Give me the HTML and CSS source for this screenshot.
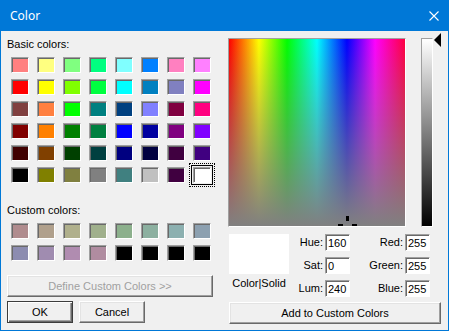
FILE: index.html
```html
<!DOCTYPE html>
<html lang="en">
<head>
    <meta charset="UTF-8">
    <title>Color</title>
    <link rel="stylesheet" href="styles.css">
</head>
<body>
    <div class="dialog">
        <div class="titlebar">
            <span class="title">Color</span>
            <svg class="close" width="10" height="10" viewBox="0 0 10 10">
                <path d="M0.5 0.5 L9.5 9.5 M9.5 0.5 L0.5 9.5" stroke="#fff" stroke-width="1.1" fill="none"/>
            </svg>
        </div>
        <div class="content">
            <div class="left">
                <div class="label">Basic colors:</div>
                <div class="swatches">
                    <span class="swatch" style="background:#ff8080"></span>
                    <span class="swatch" style="background:#ffff80"></span>
                    <span class="swatch" style="background:#80ff80"></span>
                    <span class="swatch" style="background:#00ff80"></span>
                    <span class="swatch" style="background:#80ffff"></span>
                    <span class="swatch" style="background:#0080ff"></span>
                    <span class="swatch" style="background:#ff80c0"></span>
                    <span class="swatch" style="background:#ff80ff"></span>

                    <span class="swatch" style="background:#ff0000"></span>
                    <span class="swatch" style="background:#ffff00"></span>
                    <span class="swatch" style="background:#80ff00"></span>
                    <span class="swatch" style="background:#00ff40"></span>
                    <span class="swatch" style="background:#00ffff"></span>
                    <span class="swatch" style="background:#0080c0"></span>
                    <span class="swatch" style="background:#8080c0"></span>
                    <span class="swatch" style="background:#ff00ff"></span>

                    <span class="swatch" style="background:#804040"></span>
                    <span class="swatch" style="background:#ff8040"></span>
                    <span class="swatch" style="background:#00ff00"></span>
                    <span class="swatch" style="background:#008080"></span>
                    <span class="swatch" style="background:#004080"></span>
                    <span class="swatch" style="background:#8080ff"></span>
                    <span class="swatch" style="background:#800040"></span>
                    <span class="swatch" style="background:#ff0080"></span>

                    <span class="swatch" style="background:#800000"></span>
                    <span class="swatch" style="background:#ff8000"></span>
                    <span class="swatch" style="background:#008000"></span>
                    <span class="swatch" style="background:#008040"></span>
                    <span class="swatch" style="background:#0000ff"></span>
                    <span class="swatch" style="background:#0000a0"></span>
                    <span class="swatch" style="background:#800080"></span>
                    <span class="swatch" style="background:#8000ff"></span>

                    <span class="swatch" style="background:#400000"></span>
                    <span class="swatch" style="background:#804000"></span>
                    <span class="swatch" style="background:#004000"></span>
                    <span class="swatch" style="background:#004040"></span>
                    <span class="swatch" style="background:#000080"></span>
                    <span class="swatch" style="background:#000040"></span>
                    <span class="swatch" style="background:#400040"></span>
                    <span class="swatch" style="background:#400080"></span>

                    <span class="swatch" style="background:#000000"></span>
                    <span class="swatch" style="background:#808000"></span>
                    <span class="swatch" style="background:#808040"></span>
                    <span class="swatch" style="background:#808080"></span>
                    <span class="swatch" style="background:#408080"></span>
                    <span class="swatch" style="background:#c0c0c0"></span>
                    <span class="swatch" style="background:#400040"></span>
                    <span class="swatch selected" style="background:#ffffff"></span>
                </div>

                <div class="label custom-label">Custom colors:</div>
                <div class="swatches">
                    <span class="swatch" style="background:#b08c8e"></span>
                    <span class="swatch" style="background:#b0a08c"></span>
                    <span class="swatch" style="background:#b0b08c"></span>
                    <span class="swatch" style="background:#a0b08c"></span>
                    <span class="swatch" style="background:#8cb08c"></span>
                    <span class="swatch" style="background:#8cb0a0"></span>
                    <span class="swatch" style="background:#8cb0b0"></span>
                    <span class="swatch" style="background:#8ca0b0"></span>

                    <span class="swatch" style="background:#8c8cb0"></span>
                    <span class="swatch" style="background:#a08cb0"></span>
                    <span class="swatch" style="background:#b08cb0"></span>
                    <span class="swatch" style="background:#b08ca0"></span>
                    <span class="swatch" style="background:#000000"></span>
                    <span class="swatch" style="background:#000000"></span>
                    <span class="swatch" style="background:#000000"></span>
                    <span class="swatch" style="background:#000000"></span>
                </div>

                <button class="btn define" disabled>Define Custom Colors &gt;&gt;</button>
                <div class="btn-row">
                    <button class="btn default">OK</button>
                    <button class="btn">Cancel</button>
                </div>
            </div>

            <div class="right">
                <div class="picker">
                    <div class="spectrum">
                        <svg class="cross" width="19" height="12" viewBox="0 0 19 12">
                            <rect x="8" y="0" width="3" height="5" fill="#000"/>
                            <rect x="0" y="8" width="5" height="2" fill="#000"/>
                            <rect x="14" y="8" width="5" height="2" fill="#000"/>
                        </svg>
                    </div>
                    <div class="lum">
                        <svg class="arrow" width="7" height="14" viewBox="0 0 7 14">
                            <polygon points="0,7 7,0 7,14" fill="#000"/>
                        </svg>
                    </div>
                </div>

                <div class="values">
                    <div class="preview"></div>
                    <label class="vlabel">Hue:</label>
                    <input class="field" type="text" value="160">
                    <label class="vlabel">Red:</label>
                    <input class="field" type="text" value="255">

                    <label class="vlabel">Sat:</label>
                    <input class="field" type="text" value="0">
                    <label class="vlabel">Green:</label>
                    <input class="field" type="text" value="255">

                    <div class="solid">Color|Solid</div>
                    <label class="vlabel">Lum:</label>
                    <input class="field" type="text" value="240">
                    <label class="vlabel">Blue:</label>
                    <input class="field" type="text" value="255">
                </div>

                <button class="btn add">Add to Custom Colors</button>
            </div>
        </div>
    </div>
</body>
</html>
```

FILE: styles.css
```css
body { margin: 0; background: #f0f0f0; font-family: "Liberation Sans", Arial, sans-serif; font-size: 11px; color: #000; }

.dialog { width: 449px; height: 331px; box-sizing: border-box; border: 1px solid #0078d7; border-top: none; background: #f0f0f0; }

.titlebar { height: 31px; background: #0078d7; display: flex; align-items: center; padding-left: 9px; }
.title { font-family: "Noto Sans", "Open Sans", sans-serif; font-size: 12px; color: #fff; }
.close { margin-left: auto; margin-right: 9px; }

.content { display: flex; padding: 7px 0 0 6px; }

.left { width: 206px; display: flex; flex-direction: column; }
.label { line-height: 13px; height: 13px; }
.custom-label { margin-top: 21px; }

.swatches {
    display: grid;
    grid-template-columns: repeat(8, 18px);
    grid-auto-rows: 16px;
    column-gap: 8px;
    row-gap: 6px;
    margin: 6px 0 0 4px;
}
.swatch {
    box-sizing: border-box;
    border: 1px solid;
    border-color: #a0a0a0 #fff #fff #a0a0a0;
    box-shadow: inset 1px 1px 0 #696969;
}
.swatch.selected {
    box-shadow: inset 1px 1px 0 #696969, 0 0 0 1px #f0f0f0, 0 0 0 2px #000;
    outline: 1px dotted #000;
    outline-offset: 3px;
}

.btn {
    box-sizing: border-box;
    height: 22px;
    padding: 0;
    background: #f0f0f0;
    font-family: "Liberation Sans", Arial, sans-serif;
    font-size: 11px;
    color: #000;
    border: 1px solid;
    border-color: #fff #696969 #696969 #fff;
    box-shadow: inset -1px -1px 0 #a0a0a0, inset 1px 1px 0 #e3e3e3;
}
.btn:disabled { color: #a0a0a0; }
.btn.default { border-color: #3c3c3c; box-shadow: inset 1px 1px 0 #fff, inset -1px -1px 0 #696969, inset -2px -2px 0 #a0a0a0; }
.define { width: 206px; margin-top: 14px; }
.btn-row { display: flex; gap: 6px; margin-top: 4px; }
.btn-row .btn { width: 66px; }

.right { margin-left: 15px; width: 213px; display: flex; flex-direction: column; }

.picker { display: flex; align-items: flex-start; }
.spectrum {
    position: relative;
    overflow: hidden;
    width: 178px;
    height: 189px;
    box-sizing: border-box;
    border: 1px solid;
    border-color: #a0a0a0 #fff #fff #a0a0a0;
    background:
        linear-gradient(to bottom, rgba(128,128,128,0), #808080),
        linear-gradient(to right, #ff0000, #ffff00 17%, #00ff00 33%, #00ffff 50%, #0000ff 67%, #ff00ff 83%, #ff0040);
}
.cross { position: absolute; left: 109px; top: 177px; }

.lum {
    position: relative;
    margin-left: 15px;
    width: 12px;
    height: 189px;
    box-sizing: border-box;
    border: 1px solid;
    border-color: #a0a0a0 #fff #fff #a0a0a0;
    background: linear-gradient(to bottom, #fff, #000);
}
.arrow { position: absolute; left: 12px; top: -6px; }

.values {
    display: grid;
    grid-template-columns: 60px 36px 25px 55px 25px;
    grid-template-rows: 17px 17px 17px;
    row-gap: 6px;
    margin: 7px 0 0 1px;
}
.preview { grid-row: 1 / 3; grid-column: 1; background: #fff; }
.solid { grid-column: 1; text-align: center; line-height: 13px; align-self: start; margin-top: -3px; }
.vlabel { text-align: right; padding-right: 2px; line-height: 17px; }
.field {
    box-sizing: border-box;
    width: 25px;
    height: 17px;
    margin: 0;
    padding: 0 0 0 2px;
    background: #fff;
    font-family: "Liberation Sans", Arial, sans-serif;
    font-size: 11px;
    color: #000;
    border: 1px solid;
    border-color: #a0a0a0 #fff #fff #a0a0a0;
    box-shadow: inset 1px 1px 0 #696969;
    outline: none;
}

.add { width: 212px; margin: 5px 0 0 1px; }
```
